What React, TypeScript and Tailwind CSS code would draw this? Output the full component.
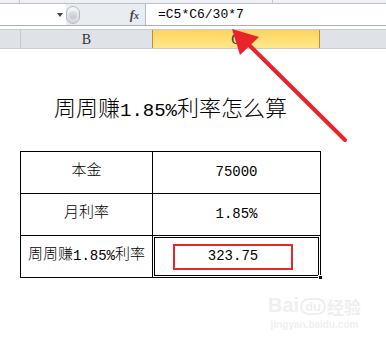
export default function App() {
  return (
    <div className="relative w-[386px] h-[349px] overflow-hidden bg-white font-['Liberation_Mono','Noto_Sans_CJK_SC',monospace] text-black">
      {/* ribbon edge */}
      <div className="flex h-[4px] bg-[#eef0f3] border-b border-[#b9c0c9]">
        <div className="w-[20px] border-r border-[#c3c8cf]" />
        <div className="w-[253px] border-r border-[#c3c8cf]" />
      </div>

      {/* formula bar */}
      <div className="flex h-[22px] bg-white border-b border-[#a9b1bc]">
        <div className="flex w-[66px] items-center justify-end pr-[3px]">
          <div className="h-0 w-0 border-x-[3px] border-t-[4px] border-x-transparent border-t-[#444]" />
        </div>
        <div className="flex flex-1 items-center bg-[#e9ecf0] max-w-[79px]">
          <div className="h-[18px] w-[14px] rounded-full border border-[#b4bac3] bg-gradient-to-b from-[#f7f8fa] to-[#d0d5dc] flex items-center justify-center">
            <div className="h-[8px] w-[8px] rounded-full bg-gradient-to-b from-[#dfe3e8] to-[#c3c9d1]" />
          </div>
          <div className="ml-auto mr-[6px] font-['Liberation_Serif',serif] italic font-bold text-[13px] leading-none text-[#444]">
            f<span className="text-[10px]">x</span>
          </div>
        </div>
        <div className="w-px bg-[#b6bcc5]" />
        <div className="flex flex-1 items-center pl-[12px] text-[13px] leading-none">=C5*C6/30*7</div>
      </div>

      {/* column headers */}
      <div className="mt-[3px] flex h-[20px] border-y border-[#c6cbd2] bg-[#dfe3e8] font-['Liberation_Serif',serif] text-[14px] text-[#333]">
        <div className="w-[21px] border-r border-[#c3c8cf]" />
        <div className="flex w-[131px] items-center justify-center">B</div>
        <div className="flex w-[168px] items-center justify-center border-x border-[#c88a2b] bg-gradient-to-b from-[#fcd45e] to-[#ffe88a]">C</div>
        <div className="flex-1" />
      </div>

      {/* sheet */}
      <div className="ml-[20px] w-[301px]">
        <div className="mt-[47px] flex h-[30px] items-center justify-center text-[19px] leading-none">
          <span className="text-[22px] font-light">周周赚</span>1.85%<span className="text-[22px] font-light">利率怎么算</span>
        </div>

        <div className="mt-[25px] border border-black text-[14px]">
          <div className="flex h-[42px] border-b border-black">
            <div className="flex w-[132px] items-center justify-center border-r border-black text-[15px] font-light">本金</div>
            <div className="flex flex-1 items-center justify-center">75000</div>
          </div>
          <div className="flex h-[42px] border-b border-black">
            <div className="flex w-[132px] items-center justify-center border-r border-black text-[15px] font-light">月利率</div>
            <div className="flex flex-1 items-center justify-center">1.85%</div>
          </div>
          <div className="flex h-[41px]">
            <div className="flex w-[132px] items-center justify-center border-r border-black text-[14px]">
              <span className="text-[15px] font-light">周周赚</span>1.85%<span className="text-[15px] font-light">利率</span>
            </div>
            <div className="relative flex flex-1 items-center pl-[20px] pr-[27px]">
              <div className="absolute inset-[1px] border border-black" />
              <div className="flex h-[26px] w-full items-center justify-center border-2 border-[#e8262b]">323.75</div>
              <div className="absolute -bottom-[3px] -right-[3px] h-[5px] w-[5px] border border-white bg-black" />
            </div>
          </div>
        </div>
      </div>

      {/* baidu watermark */}
      <div className="absolute left-[268px] top-[295px] flex flex-col items-center text-[#efefef]">
        <div className="flex items-end font-['Liberation_Sans',sans-serif] text-[20px] font-bold leading-none">
          <span>Bai</span>
          <span className="mx-[1px] rounded-full border-2 border-[#efefef] px-[3px] text-[13px]">du</span>
          <span className="font-['Noto_Sans_CJK_SC',sans-serif] text-[17px]">经验</span>
        </div>
        <div className="mt-[5px] font-['Liberation_Sans',sans-serif] text-[10px] font-bold leading-none">jingyan.baidu.com</div>
      </div>

      {/* red arrow */}
      <svg className="absolute left-0 top-0" width="386" height="349" viewBox="0 0 386 349">
        <line x1="345" y1="140" x2="244" y2="40" stroke="#e8232a" strokeWidth="4" strokeLinecap="round" />
        <polygon points="232,29 259,37 240,55" fill="#e8232a" />
      </svg>
    </div>
  );
}
